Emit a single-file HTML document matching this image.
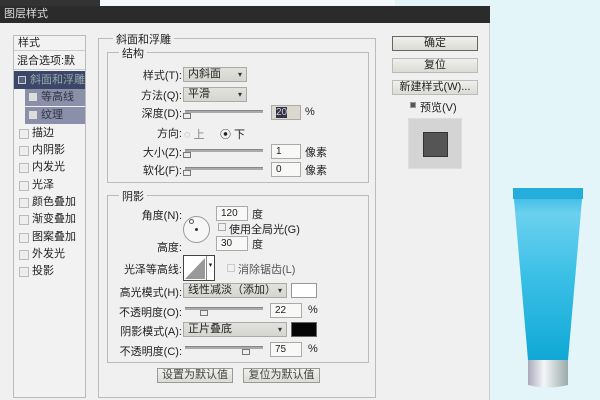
<!DOCTYPE html><html><head><meta charset="utf-8"><style>
*{margin:0;padding:0;box-sizing:border-box}
body{width:600px;height:400px;overflow:hidden;background:#e4f5f9;position:relative;font-family:"Liberation Sans","Noto Sans CJK SC",sans-serif;font-size:11px;color:#222}
.a{position:absolute}
.lbl{position:absolute;text-align:right;white-space:nowrap}
.dd{position:absolute;height:15px;border:1px solid #aaa;background:linear-gradient(#e2e2dc,#d6d6d0);padding-left:4px;line-height:13px}
.dd:after{content:"▾";position:absolute;right:4px;top:0;font-size:8px;color:#333}
.inp{position:absolute;height:15px;border:1px solid #aaa;background:#f8f8f6;padding-left:4px;line-height:13px;font-size:10px}
.sl{position:absolute;height:3px;background:#aaa;border-top:1px solid #888}
.th{position:absolute;width:8px;height:6px;border:1px solid #777;background:#eee;top:2px}
.box{position:absolute;border:1px solid #bbb}
.tt{position:absolute;background:#f0f0f0;padding:0 3px;font-size:11px}
.btn{position:absolute;height:15px;border:1px solid #999;background:linear-gradient(#f0f0ec,#dcdcd6);text-align:center;line-height:13px}
.li{position:absolute;left:16px;width:68px;height:17px;line-height:17px;padding-left:16px}
.li:before{content:"";position:absolute;left:3px;top:4px;width:8px;height:8px;border:1px solid #bbb;background:#eee}
</style></head><body>
<div class="a" style="left:0;top:0;width:100px;height:6px;background:#333"></div>
<div class="a" style="left:100px;top:0;width:295px;height:6px;background:#f4f8fa"></div>
<div class="a" style="left:0;top:6px;width:490px;height:17px;background:#2b2b2b;color:#ddd;padding-left:4px;line-height:17px;font-size:11px">图层样式</div>
<div class="a" style="left:0;top:23px;width:490px;height:377px;background:#f0f0f0;border-right:1px solid #ccc"></div>
<!-- left list -->
<div class="a" style="left:13px;top:35px;width:73px;height:363px;border:1px solid #bbb;background:#f2f2f2"></div>
<div class="a" style="left:14px;top:36px;width:71px;height:15px;border-bottom:1px solid #ccc;padding-left:4px;line-height:15px">样式</div>
<div class="a" style="left:14px;top:52px;width:71px;height:18px;border-bottom:1px solid #ccc;padding-left:3px;line-height:18px;font-size:11px">混合选项:默认</div>
<div class="a" style="left:14px;top:71px;width:71px;height:18px;background:#3b4668;color:#9aa;padding-left:16px;line-height:18px">斜面和浮雕</div>
<div class="a" style="left:18px;top:76px;width:8px;height:8px;border:1px solid #ccc;background:#555f80"></div>
<div class="a" style="left:25px;top:89px;width:60px;height:17px;background:#8a90aa;padding-left:16px;line-height:17px;color:#334">等高线</div>
<div class="a" style="left:25px;top:107px;width:60px;height:17px;background:#8a90aa;padding-left:16px;line-height:17px;color:#334">纹理</div>
<div class="a" style="left:29px;top:93px;width:8px;height:8px;background:#ddd"></div>
<div class="a" style="left:29px;top:111px;width:8px;height:8px;background:#ddd"></div>
<div class="li" style="top:125px">描边</div>
<div class="li" style="top:142px">内阴影</div>
<div class="li" style="top:159px">内发光</div>
<div class="li" style="top:177px">光泽</div>
<div class="li" style="top:194px">颜色叠加</div>
<div class="li" style="top:211px">渐变叠加</div>
<div class="li" style="top:229px">图案叠加</div>
<div class="li" style="top:246px">外发光</div>
<div class="li" style="top:263px">投影</div>
<!-- main group -->
<div class="box" style="left:98px;top:38px;width:278px;height:360px"></div>
<div class="tt" style="left:113px;top:31px">斜面和浮雕</div>
<div class="box" style="left:107px;top:52px;width:262px;height:131px"></div>
<div class="tt" style="left:119px;top:45px">结构</div>
<div class="lbl" style="left:120px;width:62px;top:67px">样式(T):</div>
<div class="dd" style="left:183px;top:67px;width:64px">内斜面</div>
<div class="lbl" style="left:120px;width:62px;top:87px">方法(Q):</div>
<div class="dd" style="left:183px;top:87px;width:64px">平滑</div>
<div class="lbl" style="left:120px;width:62px;top:105px">深度(D):</div>
<div class="sl" style="left:185px;top:110px;width:78px"><div class="th" style="left:-2px"></div></div>
<div class="inp" style="left:271px;top:105px;width:30px;background:#dcd8d0"><span style="background:#334;color:#ccd">20</span></div>
<div class="a" style="left:305px;top:106px">%</div>
<div class="lbl" style="left:120px;width:62px;top:125px">方向:</div>
<div class="a" style="left:184px;top:126px;color:#888">◌ 上</div>
<div class="a" style="left:220px;top:126px">⦿ 下</div>
<div class="lbl" style="left:120px;width:62px;top:144px">大小(Z):</div>
<div class="sl" style="left:185px;top:149px;width:78px"><div class="th" style="left:-2px"></div></div>
<div class="inp" style="left:271px;top:144px;width:30px">1</div>
<div class="a" style="left:305px;top:144px">像素</div>
<div class="lbl" style="left:120px;width:62px;top:162px">软化(F):</div>
<div class="sl" style="left:185px;top:167px;width:78px"><div class="th" style="left:-2px"></div></div>
<div class="inp" style="left:271px;top:162px;width:30px">0</div>
<div class="a" style="left:305px;top:162px">像素</div>
<div class="box" style="left:107px;top:195px;width:262px;height:168px"></div>
<div class="tt" style="left:119px;top:188px">阴影</div>
<div class="lbl" style="left:120px;width:62px;top:207px">角度(N):</div>
<div class="a" style="left:183px;top:216px;width:27px;height:27px;border:1px solid #999;border-radius:50%;background:#f6f6f6"></div>
<div class="a" style="left:195px;top:228px;width:3px;height:3px;background:#333;border-radius:50%"></div>
<div class="a" style="left:189px;top:219px;width:5px;height:5px;border:1px solid #555;border-radius:50%"></div>
<div class="inp" style="left:216px;top:206px;width:32px">120</div>
<div class="a" style="left:252px;top:206px">度</div>
<div class="a" style="left:218px;top:223px;width:8px;height:8px;border:1px solid #aaa"></div>
<div class="a" style="left:229px;top:221px">使用全局光(G)</div>
<div class="lbl" style="left:120px;width:62px;top:239px">高度:</div>
<div class="inp" style="left:216px;top:236px;width:32px">30</div>
<div class="a" style="left:252px;top:236px">度</div>
<div class="lbl" style="left:100px;width:82px;top:261px">光泽等高线:</div>
<div class="a" style="left:183px;top:255px;width:32px;height:26px;border:1px solid #444;background:#fff"><svg width="22" height="24" style="position:absolute;left:0;top:0"><polygon points="1,23 21,2 21,23" fill="#999"/></svg><div style="position:absolute;right:0;top:0;width:8px;height:24px;border-left:1px solid #888;font-size:7px;text-align:center;line-height:20px">▾</div></div>
<div class="a" style="left:227px;top:264px;width:8px;height:8px;border:1px solid #ccc"></div>
<div class="a" style="left:238px;top:261px;color:#555">消除锯齿(L)</div>
<div class="lbl" style="left:100px;width:82px;top:284px">高光模式(H):</div>
<div class="dd" style="left:183px;top:283px;width:104px">线性减淡（添加）</div>
<div class="a" style="left:291px;top:283px;width:26px;height:15px;border:1px solid #999;background:#fff"></div>
<div class="lbl" style="left:100px;width:82px;top:304px">不透明度(O):</div>
<div class="sl" style="left:185px;top:307px;width:78px"><div class="th" style="left:15px"></div></div>
<div class="inp" style="left:270px;top:303px;width:32px">22</div>
<div class="a" style="left:308px;top:304px">%</div>
<div class="lbl" style="left:100px;width:82px;top:323px">阴影模式(A):</div>
<div class="dd" style="left:183px;top:322px;width:104px">正片叠底</div>
<div class="a" style="left:291px;top:322px;width:26px;height:15px;border:1px solid #666;background:#050505"></div>
<div class="lbl" style="left:100px;width:82px;top:343px">不透明度(C):</div>
<div class="sl" style="left:185px;top:346px;width:78px"><div class="th" style="left:57px"></div></div>
<div class="inp" style="left:270px;top:342px;width:32px">75</div>
<div class="a" style="left:308px;top:343px">%</div>
<div class="btn" style="left:157px;top:368px;width:76px;color:#444">设置为默认值</div>
<div class="btn" style="left:243px;top:368px;width:77px;color:#444">复位为默认值</div>
<!-- right -->
<div class="btn" style="left:392px;top:36px;width:86px;border-color:#666">确定</div>
<div class="btn" style="left:392px;top:58px;width:86px;border-color:#bbb">复位</div>
<div class="btn" style="left:392px;top:80px;width:86px;border-color:#bbb">新建样式(W)...</div>
<div class="a" style="left:410px;top:102px;width:6px;height:6px;border:1px solid #999;background:#555"></div>
<div class="a" style="left:420px;top:99px">预览(V)</div>
<div class="a" style="left:408px;top:118px;width:54px;height:51px;background:#d4d4d4;border:1px solid #ddd"></div>
<div class="a" style="left:423px;top:132px;width:25px;height:25px;background:#555;border:1px solid #333"></div>
<!-- tube -->
<svg class="a" style="left:505px;top:180px" width="90" height="215">
<defs><linearGradient id="g" x1="0" y1="0" x2="0" y2="1"><stop offset="0" stop-color="#2bb4de"/><stop offset=".15" stop-color="#6cd0ef"/><stop offset=".5" stop-color="#3cc0e6"/><stop offset="1" stop-color="#10a8d6"/></linearGradient>
<linearGradient id="c" x1="0" y1="0" x2="1" y2="0"><stop offset="0" stop-color="#aab"/><stop offset=".4" stop-color="#f4f6f8"/><stop offset="1" stop-color="#9aa"/></linearGradient></defs>
<polygon points="8,8 78,8 63,180 23,180" fill="url(#g)"/>
<rect x="8" y="8" width="70" height="11" fill="#25aedb"/>
<path d="M23,180 H63 V205 Q43,210 23,205Z" fill="url(#c)"/>
</svg>
</body></html>
